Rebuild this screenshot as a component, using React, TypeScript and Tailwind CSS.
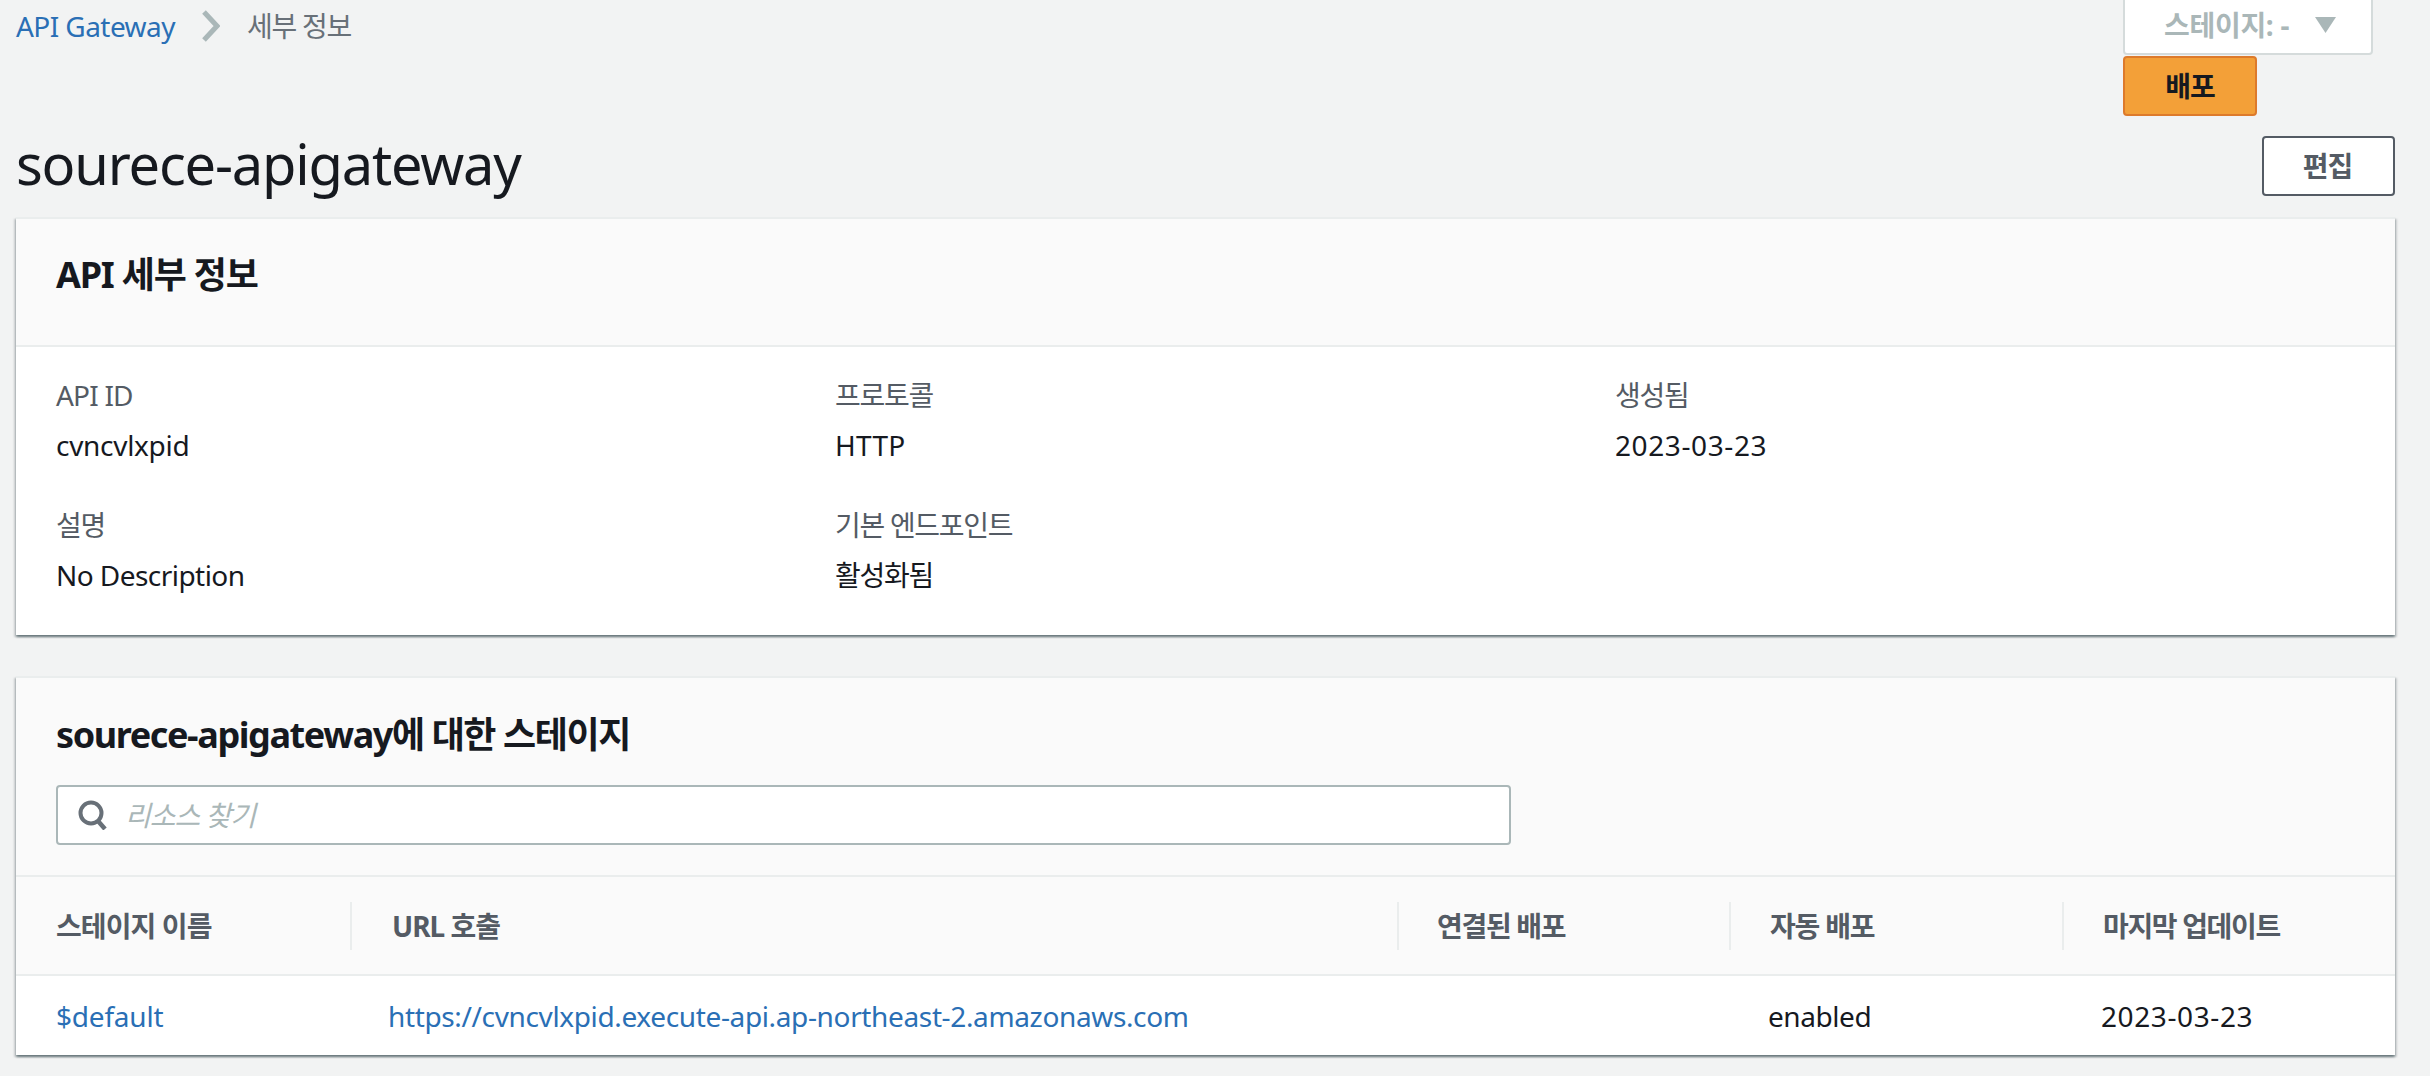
import React from "react";

const FONT = "font-['Noto_Sans','Noto_Sans_CJK_KR',sans-serif]";

const columns = [
  { label: "스테이지 이름", className: "pl-10 tracking-[-0.9px]" },
  { label: "URL 호출", className: "flex h-12 items-center border-l-2 border-[#eaeded] pl-10 tracking-[-1px]" },
  { label: "연결된 배포", className: "flex h-12 items-center border-l-2 border-[#eaeded] pl-[38px] tracking-[-1.3px]" },
  { label: "자동 배포", className: "flex h-12 items-center border-l-2 border-[#eaeded] pl-[39px] tracking-[-1.2px]" },
  { label: "마지막 업데이트", className: "flex h-12 items-center border-l-2 border-[#eaeded] pl-[39px] tracking-[-1.35px]" },
];

const Field = ({
  label,
  value,
  labelTracking = "tracking-[-1.3px]",
  valueTracking = "",
}: {
  label: string;
  value: string;
  labelTracking?: string;
  valueTracking?: string;
}) => (
  <div className="flex flex-col gap-[6px]">
    <div className={`h-[44px] leading-[44px] text-[#545b64] ${labelTracking}`}>{label}</div>
    <div className={`h-[44px] leading-[44px] text-[#16191f] ${valueTracking}`}>{value}</div>
  </div>
);

const Card = ({ children, className = "" }: { children: React.ReactNode; className?: string }) => (
  <div
    className={`border-t-2 border-[#eaeded] bg-white shadow-[0_2px_2px_0_rgba(0,28,36,0.4),2px_2px_2px_0_rgba(0,28,36,0.15),-2px_2px_2px_0_rgba(0,28,36,0.15)] ${className}`}
  >
    {children}
  </div>
);

export default function App() {
  return (
    <div className={`${FONT} h-[1076px] overflow-hidden bg-[#f2f3f3] pl-4 pr-[35px] text-[28px] text-[#16191f]`}>
      {/* Breadcrumb and stage actions */}
      <div className="flex h-[136px] items-start justify-between">
        <div className="flex h-[52px] items-center">
          <a className="tracking-[-0.56px] text-[#2a6fb5]">API Gateway</a>
          <svg className="mx-[27px] h-[32px] w-[18px]" viewBox="0 0 18 32" fill="none">
            <path d="M2 2l13 14L2 30" stroke="#aab7b8" strokeWidth="5" />
          </svg>
          <span className="tracking-[-1.25px] text-[#687078]">세부 정보</span>
        </div>
        <div className="mr-[22px] flex w-[250px] flex-col items-start gap-px">
          <div className="-mt-[2px] flex h-[57px] w-full items-center rounded-b-[4px] border-2 border-[#d5dbdb] bg-white pb-[4px] pl-[39px] font-bold tracking-[-0.3px] text-[#aab7b8]">
            <span>스테이지: -</span>
            <svg className="ml-[26px] h-[16px] w-[21px]" viewBox="0 0 21 16">
              <path d="M0 0h21L10.5 16z" fill="#aab7b8" />
            </svg>
          </div>
          <button className="flex h-[60px] w-[134px] items-center justify-center rounded-[4px] border-2 border-[#dd7a2b] bg-[#f3a038] font-bold tracking-[-1px] text-[#16191f]">
            배포
          </button>
        </div>
      </div>

      {/* Title */}
      <div className="flex h-[81px] items-start justify-between">
        <h1 className="-mt-[4px] text-[56px] leading-[62px] tracking-[-1.2px] text-[#16191f]">sourece-apigateway</h1>
        <button className="h-[60px] w-[133px] rounded-[4px] border-2 border-[#545b64] bg-white pr-[2px] font-bold tracking-[-1px] text-[#545b64]">
          편집
        </button>
      </div>

      {/* API details */}
      <Card>
        <div className="flex h-[128px] items-start border-b-2 border-[#eaeded] bg-[#fafafa] pl-10 pt-[32px]">
          <h2 className="text-[36px] font-bold leading-[48px] tracking-[-1.2px]">API 세부 정보</h2>
        </div>
        <div className="grid grid-cols-[779px_780px_1fr] gap-y-[36px] pb-[38px] pl-10 pt-[26px]">
          <Field label="API ID" labelTracking="tracking-[-0.8px]" value="cvncvlxpid" valueTracking="tracking-[-0.3px]" />
          <Field label="프로토콜" value="HTTP" valueTracking="tracking-[0.3px]" />
          <Field label="생성됨" value="2023-03-23" valueTracking="tracking-[0.6px]" />
          <Field label="설명" value="No Description" valueTracking="tracking-[-0.55px]" />
          <Field label="기본 엔드포인트" value="활성화됨" valueTracking="tracking-[-1.3px]" />
        </div>
      </Card>

      {/* Stages */}
      <Card className="mt-[41px]">
        <div className="flex h-[199px] flex-col border-b-2 border-[#eaeded] bg-[#fafafa] px-10 pt-[33px]">
          <h2 className="text-[36px] font-bold leading-[48px] tracking-[-1.4px]">sourece-apigateway에 대한 스테이지</h2>
          <div className="mt-[26px] flex h-[60px] w-[1455px] items-center rounded-[4px] border-2 border-[#aab7b8] bg-white pl-[20px]">
            <svg className="h-[30px] w-[30px]" viewBox="0 0 30 30" fill="none">
              <circle cx="13" cy="13" r="10.5" stroke="#687078" strokeWidth="4" />
              <path d="M20 21l7 8" stroke="#687078" strokeWidth="4.5" />
            </svg>
            <span className="ml-[17px] italic tracking-[-1px] text-[#aab7b8]">리소스 찾기</span>
          </div>
        </div>
        <div className="grid h-[99px] grid-cols-[334px_1047px_332px_333px_1fr] items-center border-b-2 border-[#eaeded] bg-[#fafafa] font-bold text-[#545b64]">
          {columns.map((col) => (
            <div key={col.label} className={col.className}>
              {col.label}
            </div>
          ))}
        </div>
        <div className="grid h-[79px] grid-cols-[334px_1047px_332px_333px_1fr] items-center">
          <a className="pl-10 tracking-[-0.2px] text-[#2a6fb5]">$default</a>
          <a className="pl-[38px] tracking-[-0.36px] text-[#2a6fb5]">https://cvncvlxpid.execute-api.ap-northeast-2.amazonaws.com</a>
          <div />
          <div className="pl-[39px] tracking-[-0.44px]">enabled</div>
          <div className="pl-[39px] tracking-[0.6px]">2023-03-23</div>
        </div>
      </Card>
    </div>
  );
}
